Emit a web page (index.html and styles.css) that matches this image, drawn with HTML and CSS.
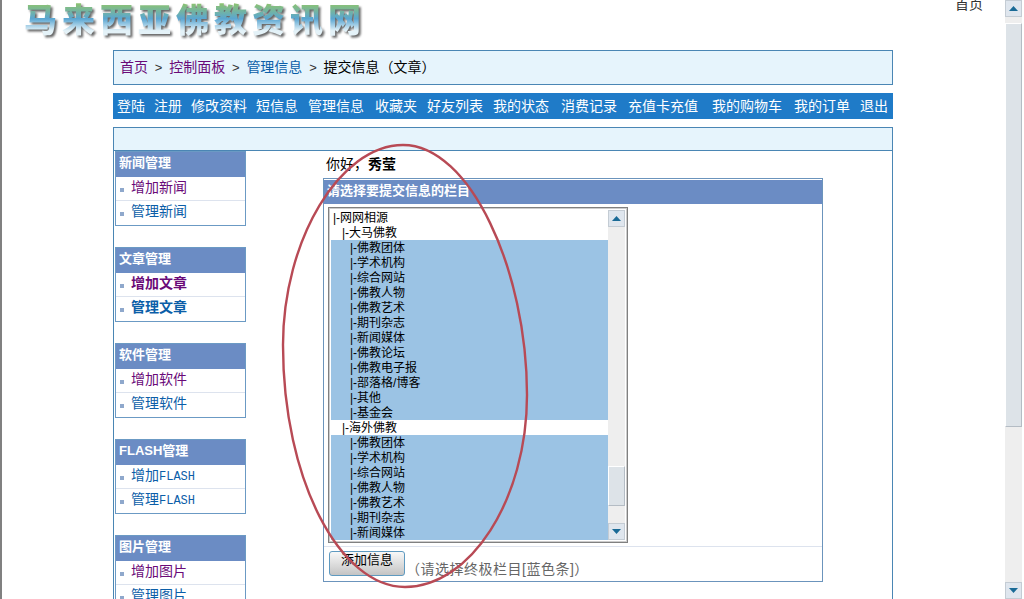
FILE: index.html
```html
<!DOCTYPE html>
<html lang="zh-CN">

<head>
    <meta charset="UTF-8" />
    <title>提交信息</title>
    <link rel="stylesheet" href="styles.css">
</head>

<body>
    <div class="page">
        <div class="content">
            <div class="header">
                <div class="logo">马来西亚佛教资讯网</div>
                <a class="home">首页</a>
            </div>
            <div class="crumbs">
                <a class="visited">首页</a><span class="sep">&gt;</span><a class="visited">控制面板</a><span class="sep">&gt;</span><a>管理信息</a><span class="sep">&gt;</span><span>提交信息（文章）</span>
            </div>
            <div class="nav">
                <a>登陆</a><a>注册</a><a>修改资料</a><a>短信息</a><a>管理信息</a><a>收藏夹</a><a>好友列表</a><a>我的状态</a><a>消费记录</a><a>充值卡充值</a><a>我的购物车</a><a>我的订单</a><a>退出</a>
            </div>
            <div class="panel">
                <div class="panel-top"></div>
                <div class="panel-body">
                    <div class="sidebar">
                        <div class="side-box">
                            <div class="side-title">新闻管理</div>
                            <a class="side-item visited">增加新闻</a>
                            <a class="side-item">管理新闻</a>
                        </div>
                        <div class="side-box">
                            <div class="side-title">文章管理</div>
                            <a class="side-item visited strong">增加文章</a>
                            <a class="side-item strong">管理文章</a>
                        </div>
                        <div class="side-box">
                            <div class="side-title">软件管理</div>
                            <a class="side-item visited">增加软件</a>
                            <a class="side-item">管理软件</a>
                        </div>
                        <div class="side-box">
                            <div class="side-title">FLASH管理</div>
                            <a class="side-item">增加<span class="mono">FLASH</span></a>
                            <a class="side-item">管理<span class="mono">FLASH</span></a>
                        </div>
                        <div class="side-box">
                            <div class="side-title">图片管理</div>
                            <a class="side-item visited">增加图片</a>
                            <a class="side-item">管理图片</a>
                        </div>
                    </div>
                    <div class="main">
                        <div class="hello">你好，<b>秀莹</b></div>
                        <div class="choose">
                            <div class="choose-title">请选择要提交信息的栏目</div>
                            <div class="choose-body">
                                <div class="listbox">
                                    <div class="tree">
                                        <div class="lv1">|-网网相源</div>
                                        <div class="lv2">|-大马佛教</div>
                                        <div class="lv3 sel">|-佛教团体</div>
                                        <div class="lv3 sel">|-学术机构</div>
                                        <div class="lv3 sel">|-综合网站</div>
                                        <div class="lv3 sel">|-佛教人物</div>
                                        <div class="lv3 sel">|-佛教艺术</div>
                                        <div class="lv3 sel">|-期刊杂志</div>
                                        <div class="lv3 sel">|-新闻媒体</div>
                                        <div class="lv3 sel">|-佛教论坛</div>
                                        <div class="lv3 sel">|-佛教电子报</div>
                                        <div class="lv3 sel">|-部落格/博客</div>
                                        <div class="lv3 sel">|-其他</div>
                                        <div class="lv3 sel">|-基金会</div>
                                        <div class="lv2">|-海外佛教</div>
                                        <div class="lv3 sel">|-佛教团体</div>
                                        <div class="lv3 sel">|-学术机构</div>
                                        <div class="lv3 sel">|-综合网站</div>
                                        <div class="lv3 sel">|-佛教人物</div>
                                        <div class="lv3 sel">|-佛教艺术</div>
                                        <div class="lv3 sel">|-期刊杂志</div>
                                        <div class="lv3 sel">|-新闻媒体</div>
                                    </div>
                                    <div class="bar bar-small">
                                        <div class="bar-btn"><svg width="9" height="5" viewBox="0 0 9 5"><path d="M4.5 0L9 5H0z" fill="#1a6a96"/></svg></div>
                                        <div class="bar-track track-list"><div class="bar-thumb"></div></div>
                                        <div class="bar-btn"><svg width="9" height="5" viewBox="0 0 9 5"><path d="M0 0H9L4.5 5z" fill="#1a6a96"/></svg></div>
                                    </div>
                                </div>
                            </div>
                            <div class="choose-foot">
                                <button class="add-btn">添加信息</button>
                                <span class="note">（请选择终极栏目[蓝色条]）</span>
                            </div>
                        </div>
                    </div>
                </div>
            </div>
        </div>
        <div class="bar bar-page">
            <div class="bar-btn"><svg width="9" height="5" viewBox="0 0 9 5"><path d="M4.5 0L9 5H0z" fill="#1a6a96"/></svg></div>
            <div class="bar-track track-page"><div class="bar-thumb"></div></div>
            <div class="bar-btn"><svg width="9" height="5" viewBox="0 0 9 5"><path d="M0 0H9L4.5 5z" fill="#1a6a96"/></svg></div>
        </div>
        <!-- hand drawn circle on top of the screenshot -->
        <svg class="circle" width="1024" height="599" viewBox="0 0 1024 599">
            <path d="M403 145C470 145 527 270 527 395C527 500 470 587 405 587C340 587 283 480 283 345C283 240 340 145 403 145z" fill="none" stroke="#b84a55" stroke-width="2.4" />
        </svg>
    </div>
</body>

</html>
```

FILE: styles.css
```css
html,
body {
    margin: 0;
    height: 100%;
    overflow: hidden;
}

body {
    font-family: "Liberation Sans", "Noto Sans CJK SC", sans-serif;
    font-size: 14px;
    color: #000;
    background: #fff;
}

a {
    color: #0b5ea8;
}

.visited {
    color: #6a0a78;
}

.page {
    display: flex;
    position: relative;
    height: 599px;
    overflow: hidden;
    border-left: 2px solid #808080;
    box-sizing: border-box;
}

.content {
    width: 1001px;
    padding-left: 111px;
    box-sizing: border-box;
}

.header {
    display: flex;
    justify-content: space-between;
    height: 50px;
    margin-left: -111px;
}

.logo {
    height: 40px;
    margin: -2px 0 0 22px;
    font-family: "Noto Sans CJK SC", sans-serif;
    font-size: 33px;
    line-height: 40px;
    font-weight: 900;
    letter-spacing: 5px;
    white-space: nowrap;
    color: transparent;
    background: linear-gradient(#8fc46c 12%, #5aa6d2 52%, #e4f2f8 82%);
    -webkit-background-clip: text;
    background-clip: text;
    filter: drop-shadow(2px 2px 1px #666);
}

.home {
    margin: -6px 20px 0 0;
    height: 20px;
    line-height: 20px;
    color: #333;
}

.crumbs {
    width: 780px;
    height: 35px;
    line-height: 33px;
    padding-left: 6px;
    border: 1px solid #4a86b4;
    background: #e6f4fc;
    box-sizing: border-box;
}

.sep {
    margin: 0 6.8px;
    color: #333;
    font-size: 13px;
}

.nav {
    display: flex;
    width: 780px;
    height: 26px;
    line-height: 26px;
    margin-top: 8px;
    padding-left: 4px;
    background: #1f7bc8;
    box-sizing: border-box;
}

.nav a {
    flex: none;
    margin-right: 10px;
    color: #fff;
}

.nav a:nth-child(-n+3) {
    margin-right: 9px;
}

.nav a:nth-child(5),
.nav a:nth-child(9) {
    margin-right: 11px;
}

.nav a:nth-child(8),
.nav a:nth-child(11) {
    margin-right: 12px;
}

.nav a:nth-child(10) {
    margin-right: 14px;
}

.nav a:last-child {
    margin-right: 0;
}

.panel {
    width: 780px;
    margin-top: 8px;
    border-left: 1px solid #4a86b4;
    border-right: 1px solid #4a86b4;
    box-sizing: border-box;
}

.panel-top {
    height: 24px;
    margin: 0 -1px;
    border: 1px solid #4a86b4;
    background: #e6f4fc;
    box-sizing: border-box;
}

.panel-body {
    display: flex;
}

.sidebar {
    width: 209px;
    padding-left: 1px;
    box-sizing: border-box;
}

.side-box {
    width: 131px;
    height: 75px;
    margin-bottom: 21px;
    border: 1px solid #6b9ac4;
    box-sizing: border-box;
}

.side-title {
    height: 25px;
    line-height: 22px;
    padding-left: 3px;
    font-size: 13px;
    font-weight: 700;
    color: #fff;
    background: #6b8cc4;
}

.side-item {
    display: block;
    height: 24px;
    line-height: 21px;
    padding-left: 15px;
    border-bottom: 1px solid #dde3ee;
    box-sizing: border-box;
    position: relative;
}

.side-item:last-child {
    border-bottom: none;
}

.side-item::before {
    content: "";
    position: absolute;
    left: 4px;
    top: 11px;
    width: 4px;
    height: 4px;
    background: #8fa8cc;
}

.strong {
    font-weight: 700;
}

.mono {
    font-family: "Liberation Mono", monospace;
    font-size: 12px;
}

.main {
    width: 500px;
}

.hello {
    height: 27px;
    line-height: 26px;
    padding-left: 3px;
}

.choose {
    width: 500px;
    height: 404px;
    border: 1px solid #6b94bc;
    box-sizing: border-box;
}

.choose-title {
    height: 24px;
    margin-top: 1px;
    line-height: 22px;
    padding-left: 3px;
    font-size: 13px;
    font-weight: 700;
    color: #fff;
    background: #6b8cc4;
}

.choose-body {
    height: 343px;
    padding: 3px 0 0 4px;
    border-bottom: 1px solid #dde3ee;
    box-sizing: border-box;
}

.listbox {
    display: flex;
    width: 300px;
    height: 336px;
    padding: 2px 2px 1px;
    border: 1px solid #808080;
    box-shadow: inset 0 0 0 1px #ccc;
    box-sizing: border-box;
}

.tree {
    width: 277px;
    height: 330px;
    overflow: hidden;
    font-size: 12px;
    line-height: 17px;
}

.tree div {
    height: 15px;
    white-space: nowrap;
}

.lv1 {
    padding-left: 2px;
}

.lv2 {
    padding-left: 11px;
}

.lv3 {
    padding-left: 19px;
}

.sel {
    background: #9bc3e4;
}

.bar {
    display: flex;
    flex-direction: column;
    background: #eee;
}

.bar-small {
    width: 17px;
    height: 330px;
}

.bar-page {
    width: 17px;
    height: 599px;
    margin-left: 2px;
}

.bar-btn {
    display: flex;
    align-items: center;
    justify-content: center;
    height: 17px;
    flex: none;
    border: 1px solid #c4ccd4;
    background: #dfe6ee;
    box-sizing: border-box;
}

.bar-track {
    flex: 1;
}

.track-list {
    padding-top: 239px;
}

.track-page {
    padding-top: 6px;
}

.bar-thumb {
    border: 1px solid #b4bcc4;
    border-top-color: #fff;
    border-left-color: #fff;
    background: #dde3e8;
    box-sizing: border-box;
}

.track-list .bar-thumb {
    height: 40px;
}

.track-page .bar-thumb {
    height: 404px;
}

.choose-foot {
    display: flex;
    height: 34px;
    padding: 4px 0 0 5px;
    box-sizing: border-box;
}

.add-btn {
    width: 76px;
    height: 25px;
    padding: 0 0 9px;
    border: 1px solid #5f9ac0;
    border-radius: 3px;
    font-family: inherit;
    font-size: 13px;
    line-height: 15px;
    background: linear-gradient(#f8f8f8, #c4c4c4);
}

.note {
    margin: 6px 0 0 1px;
    line-height: 25px;
    letter-spacing: 0.5px;
    color: #666;
}

.circle {
    position: absolute;
    left: -2px;
    top: 0;
    pointer-events: none;
}
```
